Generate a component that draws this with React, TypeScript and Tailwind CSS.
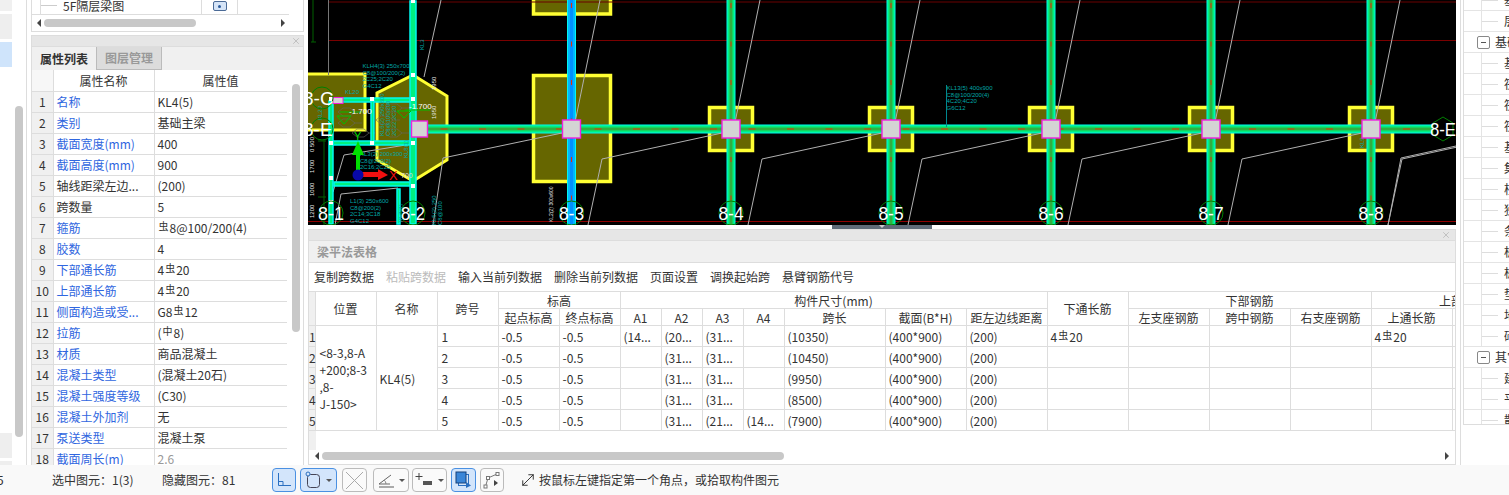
import { MoveDiagonal, X } from "lucide-react";
import type { ReactNode } from "react";

const AXES = [
  { x: 571.5, label: "8-3", blue: true },
  { x: 731, label: "8-4" },
  { x: 891, label: "8-5" },
  { x: 1051, label: "8-6" },
  { x: 1211, label: "8-7" },
  { x: 1371, label: "8-8" },
];

// rebar grade symbols, small and raised like the original font
function Bar({ children = "虫" }: { children?: ReactNode }) {
  return <span className="mx-px align-[3px] text-[10px] leading-none">{children}</span>;
}

function ArrowLeft() {
  return <span className="h-0 w-0 border-y-[4px] border-r-[4px] border-y-transparent border-r-[#444]" />;
}

function ArrowRight() {
  return <span className="h-0 w-0 border-y-[4px] border-l-[4px] border-y-transparent border-l-[#444]" />;
}

function Caret() {
  return <span className="h-0 w-0 border-x-[3px] border-t-[3px] border-x-transparent border-t-[#555]" />;
}

const props: { name: string; value: ReactNode; blue: boolean; muted?: boolean }[] = [
  { name: "名称", value: "KL4(5)", blue: true },
  { name: "类别", value: "基础主梁", blue: true },
  { name: "截面宽度(mm)", value: "400", blue: true },
  { name: "截面高度(mm)", value: "900", blue: true },
  { name: "轴线距梁左边...", value: "(200)", blue: false },
  { name: "跨数量", value: "5", blue: false },
  { name: "箍筋", value: <><Bar />8@100/200(4)</>, blue: true },
  { name: "胶数", value: "4", blue: true },
  { name: "下部通长筋", value: <>4<Bar />20</>, blue: true },
  { name: "上部通长筋", value: <>4<Bar />20</>, blue: true },
  { name: "侧面构造或受...", value: <>G8<Bar />12</>, blue: true },
  { name: "拉筋", value: <>(<Bar>中</Bar>8)</>, blue: true },
  { name: "材质", value: "商品混凝土", blue: true },
  { name: "混凝土类型", value: "(混凝土20石)", blue: true },
  { name: "混凝土强度等级", value: "(C30)", blue: true },
  { name: "混凝土外加剂", value: "无", blue: true },
  { name: "泵送类型", value: "混凝土泵", blue: true },
  { name: "截面周长(m)", value: "2.6", blue: true, muted: true },
];

function PropertyTable() {
  return (
    <table className="w-[255px] table-fixed border-collapse text-[12px] leading-[15px] text-[#333]">
      <colgroup>
        <col className="w-[21px]" />
        <col className="w-[101px]" />
        <col className="w-[133px]" />
      </colgroup>
      <thead>
        <tr className="h-[21px]">
          <th className="border border-t-0 border-l-0 border-[#ddd] bg-[#f7f7f7]" />
          <th className="border border-t-0 border-[#ddd] font-normal">属性名称</th>
          <th className="border border-t-0 border-[#ddd] font-normal">属性值</th>
        </tr>
      </thead>
      <tbody>
        {props.map((row, i) => (
          <tr key={row.name} className="h-[21px]">
            <td className="border border-l-0 border-[#ddd] bg-[#f0f0f0] text-center">{i + 1}</td>
            <td className={`overflow-hidden border border-[#ddd] pl-[3px] whitespace-nowrap ${row.blue ? "text-[#2f66e0]" : ""}`}>
              {row.name}
            </td>
            <td className={`overflow-hidden border border-[#ddd] pl-[3px] whitespace-nowrap ${row.muted ? "text-[#999]" : ""}`}>
              {row.value}
            </td>
          </tr>
        ))}
      </tbody>
    </table>
  );
}

function LeftColumn() {
  return (
    <div className="flex w-[281px] shrink-0 flex-col gap-[3px] px-[4px]">
      <div className="h-[32px] border border-t-0 border-[#ddd]">
        <div className="flex h-[15px] w-[257px] items-end overflow-hidden border-b border-[#ddd] text-[12px] leading-[12px] text-[#333]">
          <div className="flex h-[14px] w-[170px] items-start border-r border-[#ddd] pl-[8px]">
            <span className="h-full w-px bg-[#ddd]" />
            <span className="mt-[5px] h-px w-[16px] bg-[#ccc]" />
            <span className="ml-[6px] whitespace-nowrap">5F隔层梁图</span>
          </div>
          <div className="flex h-[14px] w-[36px] items-start justify-center border-r border-[#ddd]">
            <span className="mt-px flex h-[10px] w-[14px] items-center justify-center rounded-[2px] border border-[#4a6a96] bg-[#d5e4f7]">
              <span className="size-[3px] rounded-full bg-[#2a5a9a]" />
            </span>
          </div>
        </div>
        <div className="flex h-[16px] items-center pr-[18px] pl-[5px]">
          <ArrowLeft />
          <span className="ml-[3px] h-[8px] w-[152px] rounded-full bg-[#c8c8c8]" />
          <span className="flex-1" />
          <ArrowRight />
        </div>
      </div>
      <div className="flex min-h-0 flex-1 flex-col overflow-hidden border border-b-0 border-[#ddd]">
        <div className="flex h-[11px] shrink-0 items-center justify-end border-b border-[#ddd] bg-[#e6e6e6] pr-[2px]">
          <X className="size-[10px] text-[#aaa]" strokeWidth={1.5} />
        </div>
        <div className="flex h-[23px] shrink-0 bg-[#f0f0f0] text-[12px] font-bold">
          <div className="flex w-[64px] items-center justify-center text-[#333]">属性列表</div>
          <div className="flex w-[66px] items-center justify-center border border-t-0 border-[#bbb] bg-[#dcdcdc] text-[#999]">图层管理</div>
        </div>
        <div className="flex min-h-0 flex-1">
          <div className="w-[255px] overflow-hidden">
            <PropertyTable />
          </div>
          <div className="flex-1 pt-[14px] pl-[5px]">
            <div className="h-[248px] w-[8px] rounded-full bg-[#c8c8c8]" />
          </div>
        </div>
      </div>
    </div>
  );
}

function Beam({ x, blue }: { x: number; blue?: boolean }) {
  return (
    <g>
      <rect x={x - 4.5} y={0} width={9} height={225} fill="#00f8f0" />
      <rect x={x - 3.5} y={0} width={7} height={225} fill={blue ? "#00b4ff" : "#00f080"} />
      <rect x={x - 1.5} y={0} width={3} height={225} fill={blue ? "#0090ff" : "#30b040"} />
      <line x1={x} y1={3} x2={x} y2={225} stroke="#e83000" strokeWidth={1} strokeDasharray="5 33.5" />
    </g>
  );
}

function Footing({ x, size = 46 }: { x: number; size?: number }) {
  return <rect x={x - size / 2 + 1.5} y={107.5} width={size - 3} height={size - 3} fill="#666600" stroke="#ffff33" strokeWidth={3.5} />;
}

function Column({ x, y = 129, size = 18 }: { x: number; y?: number; size?: number }) {
  return <rect x={x - size / 2} y={y - size / 2} width={size} height={size} fill="#d4d4d4" stroke="#f020e0" strokeWidth={1.4} />;
}

function AxisLabel({ x, y = 213, label, width = 25 }: { x: number; y?: number; label: string; width?: number }) {
  return (
    <g>
      <circle cx={x} cy={y} r={12} fill="none" stroke="#008000" strokeWidth={1} />
      <text x={x - width / 2} y={y + 7} fontSize={19} fill="#fff" textLength={width} lengthAdjust="spacingAndGlyphs" fontFamily="Liberation Sans, sans-serif">
        {label}
      </text>
    </g>
  );
}

function Note({ x, y, lines, step = 6.5 }: { x: number; y: number; lines: string[]; step?: number }) {
  return (
    <g fill="#00a8a8" fontSize={6} fontFamily="Liberation Sans, sans-serif">
      {lines.map((line, i) => (
        <text key={line} x={x} y={y + i * step}>
          {line}
        </text>
      ))}
    </g>
  );
}

function VText({ x, y, children, fill = "#00a8a8", size = 6 }: { x: number; y: number; children: string; fill?: string; size?: number }) {
  return (
    <text x={x} y={y} fill={fill} fontSize={size} fontFamily="Liberation Sans, sans-serif" transform={`rotate(-90 ${x} ${y})`}>
      {children}
    </text>
  );
}

// cyan edged green beam for the small members on the left
function SmallBeam({ x, y, w, h }: { x: number; y: number; w: number; h: number }) {
  return <rect x={x + 1} y={y + 1} width={w - 2} height={h - 2} fill="#00f080" stroke="#00f8f0" strokeWidth={1.5} />;
}

function Mesh({ x, y }: { x: number; y: number }) {
  return <path d={`M${x} ${y}l5 -4h7l5 4l-5 4h-7zM${x + 17} ${y}h7`} fill="none" stroke="#666" strokeWidth={0.6} />;
}

function Drawing() {
  const slanted = [0, 160, 320, 480, 640, 800];
  return (
    <svg viewBox="308 0 1148 225" width={1148} height={225} className="block bg-black">
      {/* footings */}
      <rect x={533.5} y={-20} width={77} height={34} fill="#666600" stroke="#ffff33" strokeWidth={3.5} />
      <rect x={533.5} y={75.5} width={77} height={106} fill="#666600" stroke="#ffff33" strokeWidth={3.5} />
      {AXES.slice(1).map((a) => (
        <Footing key={a.label} x={a.x} />
      ))}
      <rect x={305} y={74} width={60} height={56} fill="#666600" stroke="#ffff33" strokeWidth={3} />
      <path d="M413 75L447 96V160L413 181L377 160V93Z" fill="#666600" stroke="#ffff33" strokeWidth={3} />

      {/* grid */}
      <line x1={328} y1={40.5} x2={1456} y2={40.5} stroke="#7a0000" />
      <line x1={328} y1={2} x2={1456} y2={2} stroke="#6a0000" />
      <line x1={308} y1={221.5} x2={1456} y2={221.5} stroke="#900000" />
      <line x1={328.5} y1={0} x2={328.5} y2={75} stroke="#777" />
      <path d="M313 0V42M311 42h5" stroke="#006000" fill="none" />

      {/* beams */}
      {AXES.map((a) => (
        <Beam key={a.label} x={a.x} blue={a.blue} />
      ))}
      <rect x={413} y={124.5} width={1020} height={9} fill="#00f8f0" />
      <rect x={413} y={125.5} width={1020} height={7} fill="#00f080" />
      <rect x={413} y={127.5} width={1020} height={3} fill="#30b040" />
      <line x1={440.5} y1={129} x2={1432} y2={129} stroke="#e83000" strokeDasharray="7 31.5" />

      {/* slanted leaders */}
      <g fill="none" stroke="#b0b0b0" strokeWidth={1}>
        <path d="M433 225L443 158L562 133" />
        <path d="M424 77L441 0" />
        {slanted.map((d) => (
          <path key={d} d={`M${588 + d} 225L${602 + d} 159L${722 + d} 133M${575.5 + d} 120L${600 + d} 0`} />
        ))}
        <path d="M1388 225L1401 158L1456 146" />
        <path d="M333 192L344 155L412 144" />
        <path d="M335 225L341 194L398 188" />
      </g>

      {/* left hand cluster */}
      <Mesh x={338} y={112} />
      <Mesh x={338} y={123} />
      <Mesh x={352} y={133} />
      <Mesh x={385} y={108} />
      <Mesh x={376} y={120} />
      <Mesh x={385} y={133} />
      <SmallBeam x={332} y={97} w={82} h={6} />
      <SmallBeam x={332} y={140} w={82} h={6} />
      <SmallBeam x={333} y={181} w={81} h={6} />
      <SmallBeam x={328} y={100} w={6} h={125} />
      <SmallBeam x={370} y={100} w={5} h={44} />
      <SmallBeam x={396} y={188} w={5} h={37} />
      <SmallBeam x={409} y={0} w={8} h={225} />
      <path d="M337 116h14l-7 8zM397 111h14l-7 7z" fill="none" stroke="#00c000" />
      <line x1={340} y1={112} x2={362} y2={112} stroke="#00c000" />
      <line x1={405} y1={110} x2={430} y2={110} stroke="#00c000" />
      <text x={349} y={114} fontSize={8} fill="#fff" fontFamily="Liberation Sans, sans-serif">-1.700</text>
      <text x={409} y={109} fontSize={8} fill="#fff" fontFamily="Liberation Sans, sans-serif">-1.700</text>
      <Note x={362.5} y={68} lines={["KLH4(3) 250x700", "C8@100/200(2)", "2C25;2C20", "G4C12"]} />
      <Note x={360} y={156} lines={["KL3(2) 200x300", "C8@200(2)", "2C16;2C25"]} />
      <Note x={350} y={203} lines={["L1(3) 250x600", "C8@200(2)", "2C14;3C18", "G4C12"]} />
      <Note x={946.5} y={90} lines={["KL13(5) 400x900", "C8@100/200(4)", "4C20;4C20", "G6C12"]} />
      <line x1={946.5} y1={85} x2={946.5} y2={127} stroke="#008890" />
      <text x={345} y={94} fontSize={6} fill="#00a8a8" fontFamily="Liberation Sans, sans-serif">KL20</text>
      <VText x={384} y={136}>KL6(2) 250x600</VText>
      <VText x={390} y={136}>C8@100/200</VText>
      <VText x={396} y={136}>2C22;2C20</VText>
      <VText x={408} y={158}>KL8(1)</VText>
      <VText x={322} y={120}>KL20</VText>
      <VText x={424} y={50}>KL3</VText>
      <VText x={436} y={225}>KL5(2) 250</VText>
      <VText x={442} y={225}>C8@100</VText>
      <VText x={403} y={222}>KL7(1)</VText>
      <VText x={436} y={90} fill="#e8e8e8">1950</VText>
      <VText x={436} y={119} fill="#e8e8e8">1950</VText>
      <VText x={553} y={222} fill="#e8e8e8" size={5}>KL2(2) 300x600</VText>
      <VText x={1364} y={148}>KL9</VText>
      <VText x={314} y={152} fill="#e8e8e8">0 500</VText>
      <VText x={314} y={173} fill="#e8e8e8">1700</VText>
      <VText x={314} y={196} fill="#e8e8e8">1000</VText>
      <VText x={314} y={218} fill="#e8e8e8">1200</VText>
      <path d="M324 140V225M318 141h8M318 197h8" stroke="#006000" fill="none" />

      {/* columns */}
      {AXES.map((a) => (
        <Column key={a.label} x={a.x} />
      ))}
      <Column x={419.5} size={16} />
      <rect x={333} y={97.5} width={10} height={6} fill="#d4d4d4" stroke="#f020e0" />
      <g fill="#fff">
        {[331, 372, 413].map((x) => (
          <rect key={x} x={x - 2} y={97} width={4} height={4} />
        ))}
        {[331, 372, 413].map((x) => (
          <rect key={x} x={x - 2} y={141} width={4} height={4} />
        ))}
        <rect x={329} y={176} width={4} height={4} />
        <rect x={329} y={200} width={4} height={4} />
        <rect x={411} y={184} width={4} height={4} />
        <rect x={411} y={73} width={4} height={4} />
        <rect x={411} y={0} width={4} height={3} />
      </g>

      {/* axis labels */}
      {AXES.map((a) => (
        <AxisLabel key={a.label} x={a.x} label={a.label} />
      ))}
      <AxisLabel x={331} label="8-1" width={26} />
      <AxisLabel x={413} label="8-2" width={24} />
      <path d="M1443 117l10 6v12l-10 6l-10 -6v-12z" fill="none" stroke="#008000" />
      <text x={1430} y={136} fontSize={19} fill="#fff" textLength={26} lengthAdjust="spacingAndGlyphs" fontFamily="Liberation Sans, sans-serif">8-E</text>
      <circle cx={322} cy={98} r={11} fill="none" stroke="#008000" />
      <circle cx={322} cy={129} r={11} fill="none" stroke="#008000" />
      <text x={303} y={105} fontSize={19} fill="#fff" fontFamily="Liberation Sans, sans-serif">8-C</text>
      <text x={303} y={136} fontSize={19} fill="#fff" fontFamily="Liberation Sans, sans-serif">8-E</text>

      {/* coordinate gizmo */}
      <path d="M356 172V155H352L358 141L364 155H360V172Z" fill="#00e000" />
      <path d="M362 172H378V169L388 175L378 180V177H362Z" fill="#f01010" />
      <circle cx={358} cy={175} r={5.5} fill="#0808a8" />
      <text x={354} y={140} fontSize={11} fill="#00e000" fontFamily="Liberation Sans, sans-serif">Y</text>
      <text x={389} y={180} fontSize={13} fill="#f01010" fontFamily="Liberation Sans, sans-serif">X</text>
      <text x={401} y={178} fontSize={7} fill="#ddd" fontFamily="Liberation Sans, sans-serif">700</text>
    </svg>
  );
}

const spans = [
  { no: 1, a1: "(14...", a2: "(20...", a3: "(31...", a4: "", len: "(10350)", bottom: true },
  { no: 2, a1: "", a2: "(31...", a3: "(31...", a4: "", len: "(10450)" },
  { no: 3, a1: "", a2: "(31...", a3: "(31...", a4: "", len: "(9950)" },
  { no: 4, a1: "", a2: "(31...", a3: "(31...", a4: "", len: "(8500)" },
  { no: 5, a1: "", a2: "(31...", a3: "(21...", a4: "(14...", len: "(7900)" },
];

const th = "border border-[#ddd] px-0 font-normal whitespace-nowrap";
const td = "overflow-hidden border border-[#ddd] pl-[3px] whitespace-nowrap";
const widths = [6, 61, 61, 61, 61, 61, 41, 41, 41, 41, 101, 81, 81, 81, 81, 81, 81, 81, 81, 22];

function BeamTable() {
  return (
    <table className="w-[1246px] table-fixed border-collapse text-[12px] leading-[15px] text-[#333]">
      <colgroup>
        {widths.map((w, i) => (
          <col key={i} style={{ width: w }} />
        ))}
      </colgroup>
      <thead>
        <tr className="h-[17px]">
          <th rowSpan={2} className={`${th} border-l-0 bg-[#f0f0f0]`} />
          <th rowSpan={2} className={th}>位置</th>
          <th rowSpan={2} className={th}>名称</th>
          <th rowSpan={2} className={th}>跨号</th>
          <th colSpan={2} className={th}>标高</th>
          <th colSpan={7} className={th}>构件尺寸(mm)</th>
          <th rowSpan={2} className={th}>下通长筋</th>
          <th colSpan={3} className={th}>下部钢筋</th>
          <th colSpan={3} className={th}>上部钢筋</th>
        </tr>
        <tr className="h-[17px]">
          <th className={th}>起点标高</th>
          <th className={th}>终点标高</th>
          <th className={th}>A1</th>
          <th className={th}>A2</th>
          <th className={th}>A3</th>
          <th className={th}>A4</th>
          <th className={th}>跨长</th>
          <th className={th}>截面(B*H)</th>
          <th className={th}>距左边线距离</th>
          <th className={th}>左支座钢筋</th>
          <th className={th}>跨中钢筋</th>
          <th className={th}>右支座钢筋</th>
          <th className={th}>上通长筋</th>
          <th className={th} />
          <th className={th} />
        </tr>
      </thead>
      <tbody>
        {spans.map((s, i) => (
          <tr key={s.no} className="h-[21px]">
            <td className="border border-l-0 border-[#ddd] bg-[#f0f0f0] text-left">{s.no}</td>
            {i === 0 && (
              <>
                <td rowSpan={5} className="border border-[#ddd] pl-[4px] leading-[17px]">
                  {"<8-3,8-A"}
                  <br />
                  +200;8-3
                  <br />
                  ,8-
                  <br />
                  {"J-150>"}
                </td>
                <td rowSpan={5} className="border border-[#ddd] pl-[3px]">KL4(5)</td>
              </>
            )}
            <td className={`${td} pl-[4px]`}>{s.no}</td>
            <td className={td}>-0.5</td>
            <td className={td}>-0.5</td>
            <td className={td}>{s.a1}</td>
            <td className={td}>{s.a2}</td>
            <td className={td}>{s.a3}</td>
            <td className={td}>{s.a4}</td>
            <td className={td}>{s.len}</td>
            <td className={td}>(400*900)</td>
            <td className={td}>(200)</td>
            <td className={td}>{s.bottom && <>4<Bar />20</>}</td>
            <td className={td} />
            <td className={td} />
            <td className={td} />
            <td className={td}>{s.bottom && <>4<Bar />20</>}</td>
            <td className={td} />
            <td className={td} />
          </tr>
        ))}
      </tbody>
    </table>
  );
}

const toolbarItems = ["复制跨数据", "粘贴跨数据", "输入当前列数据", "删除当前列数据", "页面设置", "调换起始跨", "悬臂钢筋代号"];

function CenterColumn() {
  return (
    <div className="flex w-[1148px] shrink-0 flex-col">
      <Drawing />
      <div className="flex h-[4px] shrink-0 justify-center">
        <div className="flex h-full w-[100px] justify-center bg-[#5f6b78]">
          <span className="h-0 w-0 border-x-[3px] border-t-[3px] border-x-transparent border-t-[#ccc]" />
        </div>
      </div>
      <div className="flex min-h-0 flex-1 flex-col overflow-hidden border border-[#ddd]">
        <div className="flex h-[11px] shrink-0 items-center justify-end border-b border-[#ddd] bg-[#e6e6e6] pr-[4px]">
          <X className="size-[10px] text-[#aaa]" strokeWidth={1.5} />
        </div>
        <div className="flex h-[22px] shrink-0 items-center border-b border-[#ddd] bg-[#f0f0f0] pl-[8px] text-[12px] font-bold text-[#999]">
          梁平法表格
        </div>
        <div className="flex h-[28px] shrink-0 items-center gap-3 pl-[5px] text-[12px] text-[#333]">
          {toolbarItems.map((item) => (
            <span key={item} className={item === "粘贴跨数据" ? "text-[#bbb]" : ""}>
              {item}
            </span>
          ))}
        </div>
        <div className="w-full overflow-hidden">
          <BeamTable />
        </div>
        <div className="h-[19px] w-[7px] shrink-0 bg-[#f0f0f0]" />
        <div className="flex h-[12px] shrink-0 items-center pr-[6px] pl-[6px]">
          <ArrowLeft />
          <span className="ml-[3px] h-[8px] w-[462px] rounded-full bg-[#c8c8c8]" />
          <span className="flex-1" />
          <ArrowRight />
        </div>
      </div>
    </div>
  );
}

const treeRows: { text: string; group?: boolean }[] = [
  { text: "基础梁" },
  { text: "层间板" },
  { text: "基础", group: true },
  { text: "基础梁" },
  { text: "筏板基础" },
  { text: "筏板主筋" },
  { text: "筏板负筋" },
  { text: "基础板带" },
  { text: "集水坑" },
  { text: "柱墩" },
  { text: "独立基础" },
  { text: "条形基础" },
  { text: "桩承台" },
  { text: "桩" },
  { text: "垫层" },
  { text: "地沟" },
  { text: "砖胎膜" },
  { text: "其它", group: true },
  { text: "建筑面积" },
  { text: "平整场地" },
  { text: "散水" },
];

function RightTree() {
  return (
    <div className="min-w-0 flex-1 pl-[4px]">
      <div className="h-full border-l border-[#ddd] pl-[2px]">
        <div className="h-[425px] overflow-hidden border-b border-l border-[#ddd]">
          <div className="-mt-[10px] text-[12px] text-[#333]">
            {treeRows.map((row, i) => (
              <div key={i} className="flex h-[21px] items-center overflow-hidden border-b border-[#e4e4e4] whitespace-nowrap">
                {row.group ? (
                  <>
                    <span className="ml-[13px] flex size-[13px] shrink-0 items-center justify-center rounded-[2px] border border-[#888]">
                      <span className="h-px w-[5px] bg-[#555]" />
                    </span>
                    <span className="ml-[5px]">{row.text}</span>
                  </>
                ) : (
                  <>
                    <span className="h-full w-[18px] shrink-0 border-r border-[#e4e4e4]" />
                    <span className="h-px w-[16px] shrink-0 bg-[#ddd]" />
                    <span className="ml-[6px]">{row.text}</span>
                  </>
                )}
              </div>
            ))}
          </div>
        </div>
      </div>
    </div>
  );
}

function ToolButton({ active, caret, children, className }: { active?: boolean; caret?: boolean; children: ReactNode; className: string }) {
  return (
    <div
      className={`flex h-[24px] shrink-0 items-center justify-center gap-[3px] rounded-[4px] border ${
        active ? "border-[#4a90e2] bg-[#d3e5fb]" : "border-[#bbb] bg-[#fafafa]"
      } ${className}`}
    >
      {children}
      {caret && <Caret />}
    </div>
  );
}

function StatusBar() {
  return (
    <div className="flex h-[30px] shrink-0 items-center bg-[#f9f9f9] text-[12px] text-[#333]">
      <span className="-ml-[3px] w-[55px]">5</span>
      <span className="w-[110px]">选中图元：1(3)</span>
      <span className="w-[110px]">隐藏图元：81</span>
      <div className="flex items-center">
        <ToolButton active className="w-[24px]">
          <svg width="16" height="16" viewBox="0 0 16 16" fill="none" stroke="#2a6fc0">
            <path d="M2.5 1V13.5H15M2.5 9.5H7V13.5" />
          </svg>
        </ToolButton>
        <ToolButton active caret className="ml-[4px] w-[37px] gap-[5px]">
          <svg width="16" height="18" viewBox="0 0 16 18" fill="none" stroke="#445">
            <rect x="2.5" y="3.5" width="12" height="13" rx="3" />
            <circle cx="3" cy="3" r="2" fill="#d3e5fb" stroke="#2a6fc0" />
          </svg>
        </ToolButton>
        <ToolButton className="ml-[5px] w-[25px]">
          <svg width="21" height="21" viewBox="0 0 21 21" stroke="#aaa" fill="none">
            <path d="M2 2L19 19M19 2L2 19" />
          </svg>
        </ToolButton>
        <ToolButton caret className="ml-[6px] w-[36px] gap-[4px]">
          <svg width="17" height="18" viewBox="0 0 17 18" fill="none" stroke="#666">
            <path d="M1 13L13 4M1 13H12" />
            <path d="M6 9Q8 10.5 8 13" stroke="#888" />
            <path d="M1 16H16" stroke="#aaa" strokeWidth="2" />
          </svg>
        </ToolButton>
        <ToolButton caret className="ml-[3px] w-[35px] gap-[4px]">
          <svg width="19" height="16" viewBox="0 0 19 16" fill="none">
            <path d="M4 1V8M0.5 4.5H7.5" stroke="#444" />
            <rect x="8" y="9" width="9" height="4" fill="#555" />
          </svg>
        </ToolButton>
        <ToolButton active className="ml-[4px] w-[25px]">
          <svg width="17" height="18" viewBox="0 0 17 18" fill="none">
            <rect x="3.5" y="3.5" width="10" height="11" stroke="#2a6fc0" />
            <rect x="1" y="1" width="10" height="11" fill="#3a86d8" stroke="#14407a" />
            <path d="M11 11L16 14.5L11 17Z" fill="#2a6fc0" />
          </svg>
        </ToolButton>
        <ToolButton className="ml-[4px] w-[24px]">
          <svg width="18" height="18" viewBox="0 0 18 18" fill="none" stroke="#777">
            <path d="M2.5 15.5L5 7L14 3" />
            <rect x="1" y="14" width="3" height="3" fill="#fff" />
            <rect x="3.5" y="5.5" width="3" height="3" fill="#fff" />
            <rect x="13" y="1.5" width="3" height="3" fill="#fff" />
            <path d="M11 9L15 12L11 15Z" fill="#444" stroke="none" />
          </svg>
        </ToolButton>
      </div>
      <MoveDiagonal className="ml-[15px] size-[18px] text-[#333]" strokeWidth={1.3} />
      <span className="ml-[2px]">按鼠标左键指定第一个角点，或拾取构件图元</span>
    </div>
  );
}

function LeftRail() {
  return (
    <div className="flex w-[27px] shrink-0 border-r border-[#ddd]">
      <div className="flex w-[12px] flex-col">
        <div className="h-[11px] bg-[#f0f0f0]" />
        <div className="mt-[3px] h-[25px] bg-[#eee]" />
        <div className="mt-[3px] h-[25px] bg-[#cfe4fb]" />
        <div className="mt-[366px] h-[25px] bg-[#eee]" />
        <div className="mt-[3px] flex-1 bg-[#eee]" />
      </div>
      <div className="pt-[106px] pl-[3px]">
        <div className="h-[331px] w-[8px] rounded-full bg-[#c8c8c8]" />
      </div>
    </div>
  );
}

export default function App() {
  return (
    <div className="flex h-[495px] w-[1509px] flex-col overflow-hidden bg-white font-['Noto_Sans_CJK_SC','Noto_Sans',sans-serif]">
      <div className="flex min-h-0 flex-1">
        <LeftRail />
        <LeftColumn />
        <CenterColumn />
        <RightTree />
      </div>
      <StatusBar />
    </div>
  );
}
